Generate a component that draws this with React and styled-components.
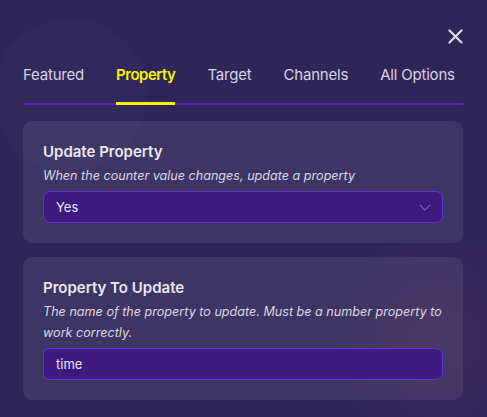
import React from 'react';
import styled, { createGlobalStyle } from 'styled-components';

const GlobalStyle = createGlobalStyle`
  html, body {
    margin: 0;
    padding: 0;
    height: 100%;
  }
  body {
    font-family: Inter, "Noto Sans", sans-serif;
    background: #2f2658;
  }
  #root {
    min-height: 100%;
  }
`

const tabs = ['Featured', 'Property', 'Target', 'Channels', 'All Options'];

const App = () => {
  return <Page>
    <GlobalStyle />
    <TopBar>
      <CloseButton aria-label="close">
        <svg width="15" height="15" viewBox="0 0 15 15">
          <path d="M1.5 1.5 L13.5 13.5 M13.5 1.5 L1.5 13.5" stroke="#dcd8e8" strokeWidth="2.2" strokeLinecap="round" />
        </svg>
      </CloseButton>
    </TopBar>

    {/* tabs */}
    <TabList>
      {tabs.map(t => <Tab key={t} active={t === 'Property'}>{t}</Tab>)}
    </TabList>

    {/* card 1 */}
    <Card>
      <Title>Update Property</Title>
      <Hint>When the counter value changes, update a property</Hint>
      <Field>
        <span>Yes</span>
        <svg width="12" height="7" viewBox="0 0 12 7">
          <polyline points="1,1 6,6 11,1" fill="none" stroke="#7a58c6" strokeWidth="1.2" />
        </svg>
      </Field>
    </Card>

    {/* card 2 */}
    <Card>
      <Title>Property To Update</Title>
      <Hint>The name of the property to update. Must be a number property to work correctly.</Hint>
      <Field>
        <span>time</span>
      </Field>
    </Card>
  </Page>
}

const Page = styled.div`
  min-height: 417px;
  box-sizing: border-box;
  padding: 0 24px 0 23px;
  background:
    radial-gradient(circle at 70px 95px, rgba(255,255,255,0.015) 0, rgba(255,255,255,0.015) 75px, transparent 78px),
    radial-gradient(circle at 440px 340px, rgba(150,60,110,0.14) 0, transparent 110px),
    #2f2658;
  overflow: hidden;
`
const TopBar = styled.div`
  display: flex;
  justify-content: flex-end;
  padding: 29px 0 0 0;
`
const CloseButton = styled.div`
  width: 15px;
  height: 15px;
  display: flex;
  cursor: pointer;
`
const TabList = styled.div`
  display: flex;
  gap: 32px;
  margin-top: 21px;
  border-bottom: 2px solid #5a20c4;
`
const Tab = styled.div`
  position: relative;
  font-size: 15px;
  line-height: 20px;
  padding-bottom: 18px;
  font-weight: ${p => p.active ? 600 : 400};
  color: ${p => p.active ? '#f7f400' : '#d8d2e8'};
  letter-spacing: ${p => p.active ? '-0.5px' : '-0.2px'};
  &::after {
    content: '';
    display: ${p => p.active ? 'block' : 'none'};
    position: absolute;
    left: 0;
    right: 0;
    bottom: -2px;
    height: 3px;
    background: #f7f400;
  }
`
const Card = styled.div`
  margin-top: 16px;
  padding: 20px;
  border-radius: 9px;
  background: rgba(255, 255, 255, 0.07);
  & + & {
    margin-top: 14px;
  }
`
const Title = styled.div`
  font-size: 15px;
  line-height: 22px;
  font-weight: 600;
  color: #ebe7f3;
`
const Hint = styled.div`
  margin-top: 2px;
  font-size: 12.6px;
  line-height: 21px;
  font-style: italic;
  color: #dcd6e8;
`
const Field = styled.div`
  margin-top: 5px;
  height: 32px;
  box-sizing: border-box;
  display: flex;
  align-items: center;
  justify-content: space-between;
  padding: 0 11px 0 12px;
  border: 1.5px solid #6531d4;
  border-radius: 7px;
  background: #3e1a80;
  font-size: 13px;
  color: #ece7f6;
`

export default App
